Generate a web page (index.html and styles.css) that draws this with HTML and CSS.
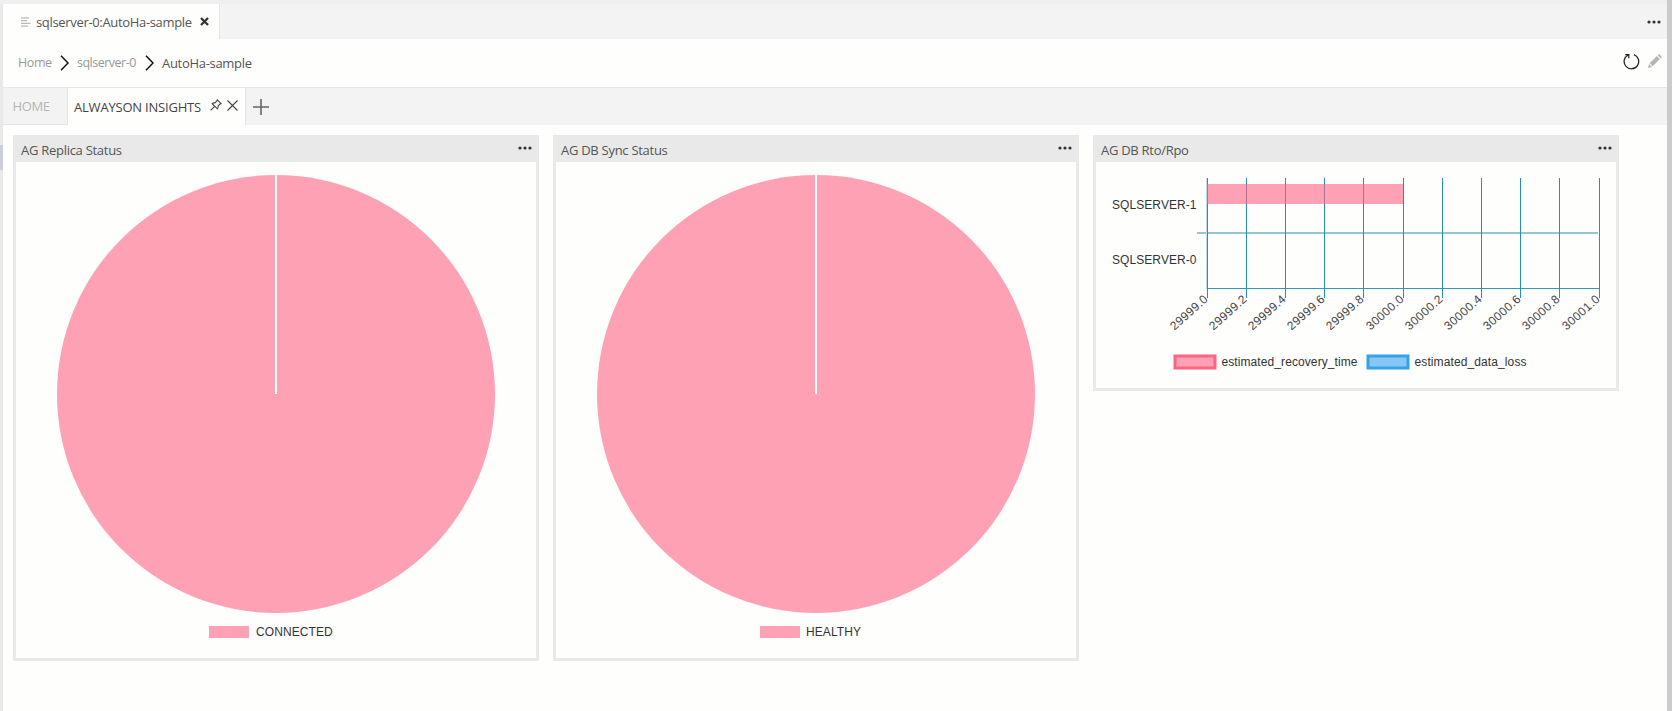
FILE: index.html
```html
<!DOCTYPE html>
<html lang="en">
<head>
<meta charset="utf-8">
<title>AutoHa-sample</title>
<link rel="stylesheet" href="styles.css">
</head>
<body>
<div class="window">
  <div class="rail"><div class="rail-mark"></div></div>
  <main class="editor">
    <header class="tabbar">
      <div class="tab">
        <svg class="tab-icon" width="10" height="10" viewBox="0 0 10 10"><path d="M0 .8h8M0 3.6h6M0 6.4h9.500M0 9.200h7" stroke="#b9b9b9" stroke-width="1.200"/></svg>
        <span class="t-tab">sqlserver-0:AutoHa-sample</span>
        <svg class="tab-close" width="9" height="9" viewBox="0 0 9 9"><path d="M1 1l7 7M8 1l-7 7" stroke="#333" stroke-width="2.300"/></svg>
      </div>
      <svg class="more" width="14" height="4" viewBox="0 0 14 4"><g fill="#333"><circle cx="2" cy="2" r="1.600"/><circle cx="7" cy="2" r="1.600"/><circle cx="12" cy="2" r="1.600"/></g></svg>
    </header>
    <nav class="crumbs">
      <span class="t-home">Home</span>
      <svg width="9" height="16" viewBox="0 0 9 16"><path d="M1 .8l7 7.200-7 7.200" fill="none" stroke="#111" stroke-width="1.500"/></svg>
      <span class="t-server">sqlserver-0</span>
      <svg width="9" height="16" viewBox="0 0 9 16"><path d="M1 .8l7 7.200-7 7.200" fill="none" stroke="#111" stroke-width="1.500"/></svg>
      <span class="t-sample">AutoHa-sample</span>
      <div class="actions">
        <svg width="17" height="17" viewBox="0 0 17 17"><path d="M10.900 1.600A7.300 7.300 0 1 1 5 2M2.200 1.500h3.600v3.700" fill="none" stroke="#222" stroke-width="1.250"/></svg>
        <svg width="14" height="14" viewBox="0 0 14 14" fill="#b5b5b5"><path d="M0 14l1-4 3 3zM1.700 9.300L8.900 2.100l3 3-7.200 7.200zM9.700 1.300L11 0l3 3-1.300 1.300z"/></svg>
      </div>
    </nav>
    <div class="subtabs">
      <div class="subtab"><span class="t-hometab">HOME</span></div>
      <div class="subtab active">
        <span class="t-insights">ALWAYSON INSIGHTS</span>
        <svg class="pin" width="12" height="12" viewBox="0 0 12 12"><path d="M7.300.8l3.900 3.900-1.200.4-2 2c.3 1.200 0 2-.7 2.700L2.200 4.700c.8-.7 1.700-1 2.700-.7l2-2zM4.600 7.400L.6 11.400" fill="none" stroke="#444" stroke-width="1.100"/></svg>
        <svg class="shut" width="11" height="11" viewBox="0 0 11 11"><path d="M.5.5l10 10M10.500.5l-10 10" stroke="#444" stroke-width="1.100"/></svg>
      </div>
      <svg class="plus" width="16" height="16" viewBox="0 0 16 16"><path d="M8 0v16M0 8h16" stroke="#666" stroke-width="1.600"/></svg>
    </div>
    <section class="cards">
      <article class="card">
        <header class="card-head"><span class="t-replica">AG Replica Status</span>
          <svg width="14" height="4" viewBox="0 0 14 4"><g fill="#333"><circle cx="2" cy="2" r="1.600"/><circle cx="7" cy="2" r="1.600"/><circle cx="12" cy="2" r="1.600"/></g></svg></header>
        <svg class="pie" width="438" height="438" viewBox="0 0 438 438"><circle cx="219" cy="219" r="219" fill="#ffa1b5"/><path d="M219 0v219" stroke="#fff" stroke-width="2"/></svg>
        <div class="legend"><i class="swatch"></i><span class="t-connected">CONNECTED</span></div>
      </article>
      <article class="card">
        <header class="card-head"><span class="t-sync">AG DB Sync Status</span>
          <svg width="14" height="4" viewBox="0 0 14 4"><g fill="#333"><circle cx="2" cy="2" r="1.600"/><circle cx="7" cy="2" r="1.600"/><circle cx="12" cy="2" r="1.600"/></g></svg></header>
        <svg class="pie" width="438" height="438" viewBox="0 0 438 438"><circle cx="219" cy="219" r="219" fill="#ffa1b5"/><path d="M219 0v219" stroke="#fff" stroke-width="2"/></svg>
        <div class="legend healthy"><i class="swatch"></i><span class="t-healthy">HEALTHY</span></div>
      </article>
      <article class="card short">
        <header class="card-head"><span class="t-rto">AG DB Rto/Rpo</span>
          <svg width="14" height="4" viewBox="0 0 14 4"><g fill="#333"><circle cx="2" cy="2" r="1.600"/><circle cx="7" cy="2" r="1.600"/><circle cx="12" cy="2" r="1.600"/></g></svg></header>
        <svg class="bars" width="520" height="226" viewBox="0 0 520 226">
          <path d="M101 71h401" stroke="#93c5d4" stroke-width="2"/>
          <path d="M111 126.500h392" stroke="#3198b8"/>
          <path d="M110.500 16v111" stroke="#bfdbe8"/>
          <path d="M111.500 16v120M150.500 16v120M189.500 16v120M228.500 16v120M267.500 16v120M307.500 16v120M346.500 16v120M385.500 16v120M424.500 16v120M463.500 16v120M503.500 16v120" stroke="#2590b2"/>
          <rect x="111" y="22" width="196" height="20" fill="#ffa1b5"/>
          <path d="M111.500 22v20M150.500 22v20M189.500 22v20M228.500 22v20M267.500 22v20" stroke="#b0708f"/>
          <g class="names">
            <text x="16" y="47" textLength="84.500">SQLSERVER-1</text>
            <text x="16" y="102" textLength="84.500">SQLSERVER-0</text>
          </g>
          <g class="ticks" transform="translate(-1.500 1.800)">
            <text transform="translate(112 134) rotate(-42)">29999.0</text>
            <text transform="translate(151 134) rotate(-42)">29999.2</text>
            <text transform="translate(190 134) rotate(-42)">29999.4</text>
            <text transform="translate(229 134) rotate(-42)">29999.6</text>
            <text transform="translate(268 134) rotate(-42)">29999.8</text>
            <text transform="translate(308 134) rotate(-42)">30000.0</text>
            <text transform="translate(347 134) rotate(-42)">30000.2</text>
            <text transform="translate(386 134) rotate(-42)">30000.4</text>
            <text transform="translate(425 134) rotate(-42)">30000.6</text>
            <text transform="translate(464 134) rotate(-42)">30000.8</text>
            <text transform="translate(504 134) rotate(-42)">30001.0</text>
          </g>
          <rect x="79" y="194" width="40" height="12" fill="#ffa1b5" stroke="#ff6384" stroke-width="3"/>
          <rect x="272" y="194" width="40" height="12" fill="#86c7f3" stroke="#36a2eb" stroke-width="3"/>
          <g class="names">
            <text x="125.500" y="204" textLength="136">estimated_recovery_time</text>
            <text x="318.500" y="204" textLength="112">estimated_data_loss</text>
          </g>
        </svg>
      </article>
    </section>
  </main>
  <div class="scroll"></div>
</div>
</body>
</html>
```
FILE: styles.css
```css
* { box-sizing: border-box; }
body { margin: 0; background: #fefefd; font: 13px/18px "Open Sans", "Noto Sans", sans-serif; color: #555; overflow: hidden; }
svg { display: block; flex: none; }
span { white-space: nowrap; }
.window { display: flex; height: 711px; border-top: 4px solid #efefef; }
.rail { width: 3px; flex: none; background: #e9e9e9; padding-top: 141px; }
.rail-mark { height: 25px; background: #cbcddd; }
.editor { flex: 1; min-width: 0; }
.scroll { width: 5px; flex: none; background: #cbcbcb; margin-top: -4px; }
.tabbar { height: 35px; display: flex; justify-content: space-between; align-items: center; background: #f3f3f3; padding-right: 6px; }
.tab { width: 217px; height: 35px; display: flex; align-items: center; background: #fefefd; border-right: 1px solid #e6e6e6; padding-left: 18px; }
.tab-icon { margin-right: 5px; }
.t-tab { width: 156px; margin-right: 8px; letter-spacing: -.33px; }
.crumbs { height: 49px; display: flex; align-items: center; padding-left: 15px; border-bottom: 1px solid #e5e5e5; }
.crumbs > svg { margin-right: 8.5px; }
.t-home { width: 41.5px; color: #999; font-size: 12.5px; letter-spacing: -.4px; }
.t-server { width: 67.5px; color: #999; font-size: 12.5px; letter-spacing: -.5px; }
.t-sample { letter-spacing: -.3px; }
.actions { display: flex; align-items: center; gap: 8px; margin-left: auto; padding: 0 5.5px 4px 0; }
.subtabs { height: 37px; display: flex; background: #f3f3f3; }
.subtab { width: 65px; display: flex; align-items: center; padding-left: 9.5px; border-right: 1px solid #e5e5e5; border-bottom: 1px solid #e5e5e5; color: #b5b5b5; }
.t-hometab { letter-spacing: -.4px; }
.active { width: 178px; padding-left: 6px; background: #fefefd; border-bottom: 0; color: #444; }
.t-insights { width: 136px; letter-spacing: -.2px; }
.pin { margin-right: 5px; }
.pin, .shut { margin-top: -3px; }
.plus { margin: 11px 0 0 7px; }
.cards { display: flex; align-items: flex-start; gap: 14px; padding: 10px 0 0 10px; }
.card { width: 526px; height: 526px; flex: none; border: 3px solid #e9e9e9; border-top: 0; }
.short { height: 256px; }
.card-head { height: 27px; display: flex; justify-content: space-between; background: #e9e9e9; padding: 6px 4px 0 5px; letter-spacing: -.28px; }
.card-head svg { margin-top: 5px; }
.pie { margin: 13px 0 0 41px; }
.legend { display: flex; align-items: center; height: 14px; margin: 12px 0 0 193px; gap: 7px; font: 12px/14px "Liberation Sans", Arial, sans-serif; color: #333; letter-spacing: .08px; }
.healthy { margin-left: 204px; gap: 6px; }
.swatch { width: 40px; height: 12px; background: #ffa1b5; }
.names, .ticks { font: 12px "Liberation Sans", Arial, sans-serif; fill: #333; }
.ticks { text-anchor: end; dominant-baseline: middle; letter-spacing: .35px; fill: #444; }
```
